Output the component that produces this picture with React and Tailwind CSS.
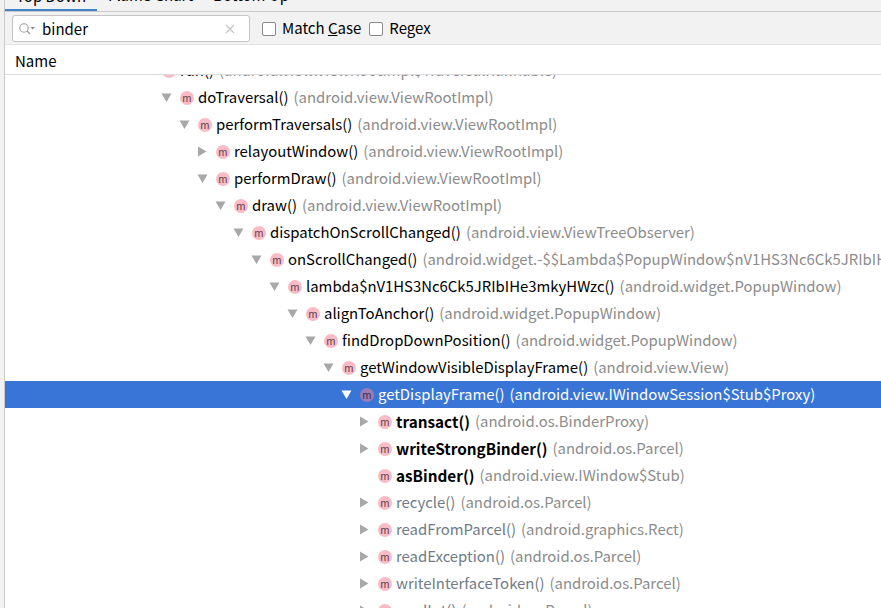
import { useState } from 'react';

const rows = [
  { depth: -1, name: 'run()', cls: '(android.view.ViewRootImpl$TraversalRunnable)', arrow: 'down', clipped: true },
  { depth: 0, name: 'doTraversal()', cls: '(android.view.ViewRootImpl)', arrow: 'down' },
  { depth: 1, name: 'performTraversals()', cls: '(android.view.ViewRootImpl)', arrow: 'down' },
  { depth: 2, name: 'relayoutWindow()', cls: '(android.view.ViewRootImpl)', arrow: 'right' },
  { depth: 2, name: 'performDraw()', cls: '(android.view.ViewRootImpl)', arrow: 'down' },
  { depth: 3, name: 'draw()', cls: '(android.view.ViewRootImpl)', arrow: 'down' },
  { depth: 4, name: 'dispatchOnScrollChanged()', cls: '(android.view.ViewTreeObserver)', arrow: 'down' },
  { depth: 5, name: 'onScrollChanged()', cls: '(android.widget.-$$Lambda$PopupWindow$nV1HS3Nc6Ck5JRIbIHe3mkyHWzc)', arrow: 'down' },
  { depth: 6, name: 'lambda$nV1HS3Nc6Ck5JRIbIHe3mkyHWzc()', cls: '(android.widget.PopupWindow)', arrow: 'down' },
  { depth: 7, name: 'alignToAnchor()', cls: '(android.widget.PopupWindow)', arrow: 'down' },
  { depth: 8, name: 'findDropDownPosition()', cls: '(android.widget.PopupWindow)', arrow: 'down' },
  { depth: 9, name: 'getWindowVisibleDisplayFrame()', cls: '(android.view.View)', arrow: 'down' },
  { depth: 10, name: 'getDisplayFrame()', cls: '(android.view.IWindowSession$Stub$Proxy)', arrow: 'down', selected: true },
  { depth: 11, name: 'transact()', cls: '(android.os.BinderProxy)', arrow: 'right', bold: true },
  { depth: 11, name: 'writeStrongBinder()', cls: '(android.os.Parcel)', arrow: 'right', bold: true },
  { depth: 11, name: 'asBinder()', cls: '(android.view.IWindow$Stub)', bold: true },
  { depth: 11, name: 'recycle()', cls: '(android.os.Parcel)', arrow: 'right', dim: true },
  { depth: 11, name: 'readFromParcel()', cls: '(android.graphics.Rect)', arrow: 'right', dim: true },
  { depth: 11, name: 'readException()', cls: '(android.os.Parcel)', arrow: 'right', dim: true },
  { depth: 11, name: 'writeInterfaceToken()', cls: '(android.os.Parcel)', arrow: 'right', dim: true },
  { depth: 11, name: 'readInt()', cls: '(android.os.Parcel)', arrow: 'right', dim: true },
];

function Arrow({ dir, selected }) {
  if (!dir) return <span className="w-[11px] shrink-0" />;
  return (
    <svg width="11" height="11" viewBox="0 0 11 11" className="shrink-0">
      {dir === 'down' ? (
        <path d="M0.5 1.5H10.5L5.5 10Z" fill={selected ? '#ffffff' : '#a8a8a8'} />
      ) : (
        <path d="M1 0.5V10.5L9.5 5.5Z" fill="#a8a8a8" />
      )}
    </svg>
  );
}

function TreeRow({ row }) {
  const nameColor = row.selected ? 'text-white' : row.dim ? 'text-[#6f7b88]' : 'text-[#000000]';
  const clsColor = row.selected ? 'text-white' : 'text-[#8c8c8c]';
  return (
    <div
      className={`h-[27px] flex items-center whitespace-nowrap shrink-0 text-[14.9px] ${row.selected ? 'bg-[#3875d7]' : ''} ${row.clipped ? '-mt-[18px]' : ''}`}
    >
      <span className="shrink-0" style={{ width: 156 + row.depth * 18 }} />
      <Arrow dir={row.arrow} selected={row.selected} />
      <span
        className={`ml-[8px] w-[14px] h-[14px] rounded-full shrink-0 flex items-center justify-center text-[10px] leading-none ${row.selected ? 'bg-[#9a7bb5] text-[#3a2a4a]' : 'bg-[#f9bcc6] text-[#5b3a40]'}`}
      >
        m
      </span>
      <span className={`ml-[4px] ${nameColor} ${row.bold ? 'font-bold text-[15.3px]' : ''}`}>{row.name}</span>
      <span className={`ml-[5px] ${clsColor}`}>{row.cls}</span>
    </div>
  );
}

export default function App() {
  const [query, setQuery] = useState('binder');

  return (
    <div className="w-[881px] h-[608px] overflow-hidden bg-white flex text-[15px] text-black font-['Noto_Sans_CJK_SC','Noto_Sans',sans-serif]">
      {/* left gutter */}
      <div className="w-[5px] shrink-0 bg-[#f2f2f2] border-r border-[#c9c9c9]" />

      <div className="flex-1 min-w-0 flex flex-col">
        {/* tabs, cut off by the top edge */}
        <div className="h-[12px] shrink-0 bg-[#f2f2f2] border-b border-[#c9c9c9] flex items-end overflow-hidden">
          <div className="w-[92px] h-[30px] shrink-0 flex justify-center border-b-[3px] border-[#4083c9] -mb-px pt-[3px]">
            <span className="leading-[22px]">Top Down</span>
          </div>
          <div className="w-[107px] h-[30px] shrink-0 flex justify-center pt-[3px]">
            <span className="leading-[22px]">Flame Chart</span>
          </div>
          <div className="w-[94px] h-[30px] shrink-0 flex justify-center pt-[3px]">
            <span className="leading-[22px]">Bottom Up</span>
          </div>
        </div>

        {/* search bar */}
        <div className="h-[33px] shrink-0 bg-[#f2f2f2] pl-[7px] pt-[1px] flex items-center border-b border-[#e4e4e4]">
          <div className="w-[238px] h-[27px] bg-white border border-[#c4c4c4] rounded-[3px] flex items-center">
            <svg width="18" height="14" viewBox="0 0 18 14" className="ml-[5px] shrink-0">
              <circle cx="6" cy="6" r="4.2" fill="none" stroke="#9a9a9a" strokeWidth="1.1" />
              <path d="M9 9L12 12" stroke="#9a9a9a" strokeWidth="1.3" />
              <path d="M12.5 5H17L14.75 7.5Z" fill="#8a8a8a" />
            </svg>
            <input
              value={query}
              onChange={(e) => setQuery(e.target.value)}
              className="ml-[6px] w-[176px] pt-[1px] outline-none bg-transparent text-black"
            />
            <svg width="10" height="10" viewBox="0 0 10 10" className="ml-[7px] shrink-0">
              <path d="M1 1L9 9M9 1L1 9" stroke="#c4c4c4" strokeWidth="1.1" />
            </svg>
          </div>
          <span className="ml-[12px] w-[14px] h-[14px] rounded-[2px] border border-[#8a8a8a] bg-white shrink-0" />
          <span className="ml-[6px]">
            Match <span className="underline">C</span>ase
          </span>
          <span className="ml-[8px] w-[14px] h-[14px] rounded-[2px] border border-[#8a8a8a] bg-white shrink-0" />
          <span className="ml-[6px]">Regex</span>
        </div>

        {/* column header */}
        <div className="h-[30px] shrink-0 bg-white border-b border-[#dcdcdc] pl-[10px] pt-[4px] flex items-center">
          Name
        </div>

        {/* call tree */}
        <div className="flex-1 min-h-0 overflow-hidden flex flex-col bg-white">
          {rows.map((row) => (
            <TreeRow key={row.name} row={row} />
          ))}
        </div>
      </div>
    </div>
  );
}
